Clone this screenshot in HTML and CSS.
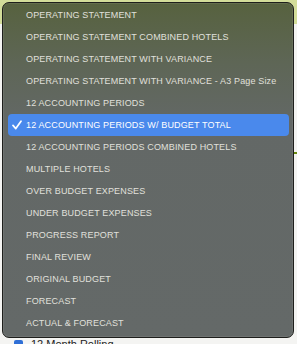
FILE: index.html
```html
<!DOCTYPE html>
<html lang="en">
<head>
  <meta charset="UTF-8">
  <title>report menu</title>
  <link rel="stylesheet" href="styles.css">
</head>
<body>

<div class="fondo">
  <div class="franja-top"></div>
  <div class="linea-verde"></div>
  <div class="texto-abajo"><span class="cuadro"></span>12 Month Rolling</div>
</div>

<!-- MENU -->
<div class="menu">
  <div class="item">OPERATING STATEMENT</div>
  <div class="item">OPERATING STATEMENT COMBINED HOTELS</div>
  <div class="item">OPERATING STATEMENT WITH VARIANCE</div>
  <div class="item">OPERATING STATEMENT WITH VARIANCE - A3 Page Size</div>
  <div class="item">12 ACCOUNTING PERIODS</div>
  <div class="item activo">
    <svg class="check" width="10" height="10" viewBox="0 0 10 10"><path d="M1 5.4 L3.8 8.6 L9 1.2" fill="none" stroke="#fff" stroke-width="1.7" stroke-linecap="round" stroke-linejoin="round"/></svg>
    12 ACCOUNTING PERIODS W/ BUDGET TOTAL
  </div>
  <div class="item">12 ACCOUNTING PERIODS COMBINED HOTELS</div>
  <div class="item">MULTIPLE HOTELS</div>
  <div class="item">OVER BUDGET EXPENSES</div>
  <div class="item">UNDER BUDGET EXPENSES</div>
  <div class="item">PROGRESS REPORT</div>
  <div class="item">FINAL REVIEW</div>
  <div class="item">ORIGINAL BUDGET</div>
  <div class="item">FORECAST</div>
  <div class="item">ACTUAL &amp; FORECAST</div>
</div>

</body>
</html>
```

FILE: styles.css
```css
html, body {
  margin: 0;
  padding: 0;
  background: #f4f4f2;
  font-family: 'Liberation Sans', Arial, sans-serif;
  overflow: hidden;
}

.fondo {
  height: 344px;
  position: relative;
}

.franja-top {
  height: 24px;
  background: #d3dd9a;
}

.linea-verde {
  position: absolute;
  top: 152px;
  right: 0;
  width: 4px;
  height: 2px;
  background: #6a8a10;
}

.texto-abajo {
  position: absolute;
  left: 14px;
  top: 337px;
  font-size: 11px;
  line-height: 14px;
  color: #222;
  display: flex;
  align-items: center;
  gap: 8px;
}

.cuadro {
  width: 9px;
  height: 9px;
  border-radius: 2px;
  background: #2f6fd6;
}

/* MENU */
.menu {
  position: absolute;
  top: 2px;
  left: 2px;
  width: 292px;
  height: 336px;
  box-sizing: border-box;
  padding-top: 1px;
  border: 1px solid #1e1f1c;
  border-radius: 7px;
  background: linear-gradient(#57623f 0px, #5e6656 60px, #636866 120px, #646968 100%);
  box-shadow: inset 0 0 0 1px rgba(255, 255, 255, 0.08);
}

.item {
  height: 22px;
  line-height: 22px;
  margin: 0 4px 0 5px;
  padding-left: 18px;
  font-size: 9px;
  letter-spacing: 0.15px;
  color: #e0e0dc;
  position: relative;
  white-space: nowrap;
}

.item.activo {
  background: #4a89ec;
  color: #fff;
  border-radius: 4px;
}

.check {
  position: absolute;
  left: 4px;
  top: 6px;
}
```
